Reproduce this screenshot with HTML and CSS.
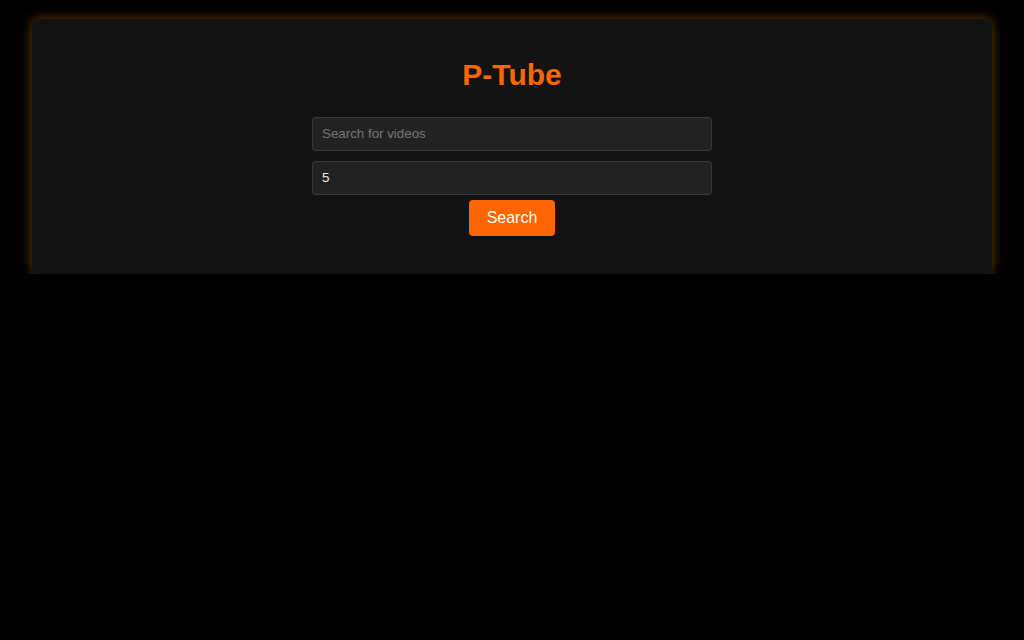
FILE: index.html
```html
<!DOCTYPE html>
<html>
<head>
<meta charset="utf-8">
<link rel="stylesheet" href="styles.css">
</head>
<body>
<div class="container">
  <h1 class="title">P-Tube</h1>
  <form class="search-form">
    <input class="field" type="text" placeholder="Search for videos">
    <input class="field" type="number" value="5">
    <button class="btn" type="button">Search</button>
  </form>
</div>
</body>
</html>
```
FILE: styles.css
```css
html, body {
  margin: 0;
  padding: 0;
  background: #000;
  font-family: "Liberation Sans", Arial, sans-serif;
}
.container {
  width: 960px;
  box-sizing: border-box;
  margin: 19px auto 0;
  height: 255px;
  background: #121212;
  border-radius: 8px;
  box-shadow: 0 0 12px rgba(255, 165, 0, 0.4);
  padding: 38px 20px 20px;
  display: flex;
  flex-direction: column;
  align-items: center;
}
.title {
  margin: 0 0 24px;
  color: #ff6600;
  font-size: 30px;
  font-weight: bold;
  line-height: 36px;
}
.search-form {
  display: flex;
  flex-direction: column;
  align-items: center;
  gap: 10px;
}
.field {
  width: 400px;
  height: 34px;
  box-sizing: border-box;
  background: #222;
  border: 1px solid #3a3a3a;
  border-radius: 4px;
  color: #eee;
  font-family: "Liberation Sans", Arial, sans-serif;
  font-size: 13.333px;
  padding: 0 9px 2px;
  outline: none;
  -moz-appearance: textfield;
}
.field::placeholder { color: #777; }
.field::-webkit-outer-spin-button,
.field::-webkit-inner-spin-button { -webkit-appearance: none; margin: 0; }
.btn {
  margin-top: -5px;
  width: 86px;
  height: 36px;
  background: #ff6600;
  color: #fff;
  border: none;
  border-radius: 4px;
  font-family: "Liberation Sans", Arial, sans-serif;
  font-size: 16px;
  cursor: pointer;
}
```
